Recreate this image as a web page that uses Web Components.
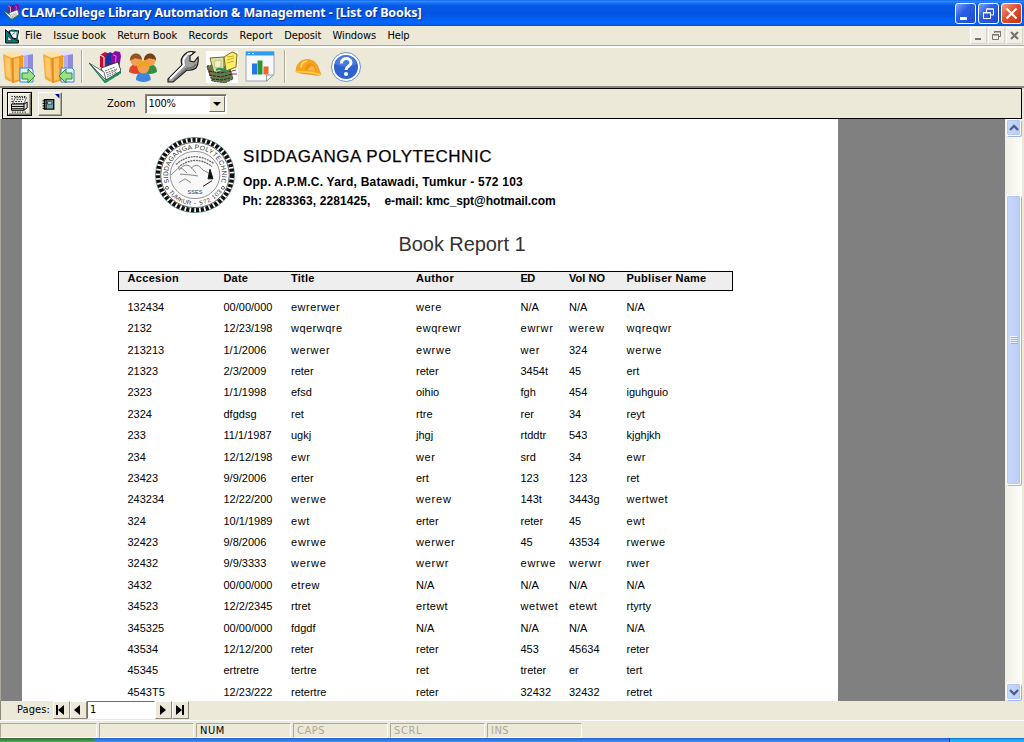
<!DOCTYPE html>
<html lang="en"><head><meta charset="utf-8"><title>CLAM-College Library Automation &amp; Management</title>
<style>
html,body{margin:0;height:742px;overflow:hidden;background:#ece9d8}
body{font:11px "DejaVu Sans Condensed","Noto Sans",sans-serif;color:#000}
</style></head><body><clam-app></clam-app>
<script>
const define=(name,html,setup)=>customElements.define(name,class extends HTMLElement{
  constructor(){super();this.attachShadow({mode:'open'});}
  connectedCallback(){this.shadowRoot.innerHTML=typeof html==='function'?html(this):html;if(setup)setup(this);}
});

/* Single line of text, tracked to occupy the width given in the "w" attribute. */
customElements.define('fit-text',class extends HTMLElement{
  connectedCallback(){
    if(this.shadowRoot)return;
    this.attachShadow({mode:'open'}).innerHTML='<style>:host{display:block;white-space:nowrap}span{display:inline-block;white-space:pre}</style><span><slot></slot></span>';
    const fit=()=>{
      const s=this.shadowRoot.querySelector('span'),n=this.textContent.length;
      s.style.letterSpacing='0';
      const nat=s.getBoundingClientRect().width;
      if(!nat||!n)return;
      let w=parseFloat(this.getAttribute('w'));
      if(!w){const c=this.textContent;w=nat+1.9*(c.match(/w/g)||[]).length;}
      s.style.letterSpacing=((w-nat)/n)+'px';
    };
    fit();requestAnimationFrame(fit);
  }
});

const box=`<path d="M18 4l12-1v20l-10 6z" fill="#b3adf0"/><path d="M25 3.500l5-.5v20l-5 3z" fill="#918bdc"/><path d="M19 6l2 0v20l-2 1z" fill="#d9d6fc"/><path d="M12 1l8-1h5l5 3-11 2z" fill="#e3e0fd"/><path d="M0 3l7-3 8 1 5 3-11 3z" fill="#ffe2a6"/><path d="M0 3l9 4 1 25-8-4z" fill="#f7ac3c"/><path d="M2 6l5 2 1 20-5-3z" fill="#ffd07c" opacity=".8"/><path d="M9 7l11-3v25l-10 3z" fill="#f39a1e"/><path d="M11 8l5-1.500v22l-5 1.500z" fill="#ffbe5a"/><path d="M9 7l1 25" stroke="#c97508" stroke-width=".7"/>`;
const books=`<path d="M11 4l5-3 5 2-1 16-9-3z" fill="#c01030"/><path d="M11 4l4 2v12" stroke="#fff" stroke-width="1" fill="none"/><path d="M17 4l4-3 4 2-2 15-6-2z" fill="#2030a0"/><path d="M22 4l4-4 5 1 1 4-3 20-7-5z" fill="#8c0aa0"/><path d="M24 4l3 1-1 15" stroke="#d080e0" fill="none"/><path d="M12 17l17-6 3 9-15 9z" fill="#fff" stroke="#222" stroke-width=".8"/><path d="M0 12l15 9 2 8z" fill="#fff" stroke="#333" stroke-width=".7"/><path d="M0 12l16 18 16-10v2L16 32z" fill="#20a060" stroke="#064" stroke-width=".6"/><path d="M16 20l10-4M17 22l11-4M18 24l10-5M18 26l10-5" stroke="#555" stroke-width=".9" stroke-dasharray="2 .7"/>`;
const person=(x,y,c,h,s=1)=>`<g transform="translate(${x} ${y}) scale(${s})"><path d="M0 18c0-5 3-8 7-8s7 3 7 8q-7 4-14 0z" fill="${c}"/><circle cx="7" cy="6.500" r="5.500" fill="#f0a050"/><path d="M1 7c-1-10 13-10 12 0-1-3-4-1-7-3-1 2-4 1-5 3z" fill="${h}"/></g>`;
const ICONS={
 out:box+`<path d="M17 17h11l2 2v12H17z" fill="#e4f1ff" stroke="#3488d8"/><path d="M19 22h6v-4l7 7-7 7v-4h-6z" fill="#9be08c" stroke="#2b8a35"/>`,
 in:box+`<path d="M18 17h11l2 2v12H18z" fill="#e4f1ff" stroke="#3488d8"/><path d="M29 22h-6v-4l-7 7 7 7v-4h6z" fill="#9be08c" stroke="#2b8a35"/>`,
 books,
 people:person(1,3,'#e0452b','#96531e')+person(15,3,'#2f9240','#764014')+person(8,10,'#3b87e0','#efa51c',1.05),
 wrench:`<path d="M20 1.500q3-1.500 8-.5l-5 4v5l4 1 4-5q1 7-2 11-4 3-9 2L6 31H1v-3l14-14q-3-7 5-12.500z" fill="#a0a0a0" stroke="#111" stroke-width="1.100"/><path d="M20 3l5-1M3 28l14-14q-2-6 3-10" stroke="#fff" stroke-width="1.800" fill="none"/><path d="M7 29l13-12q6 1 9-4" stroke="#707070" stroke-width="1.500" fill="none"/>`,
 money:`<path d="M0 0h32v32H0z" fill="#fff"/><path d="M1 15l5-1 18 2 3 12-8 4-13-2z" fill="#66794b" stroke="#222" stroke-width=".8" stroke-dasharray="2 1"/><path d="M4 7l14-1v13l-10 3z" fill="#e2e3a8" stroke="#6b6b25"/><path d="M8 10l7-1v7l-6 1z" fill="#f4f1c9" stroke="#a9a45b" stroke-width=".6"/><path d="M18 6l8-5 5 2-1 13-10 4z" fill="#ffee68" stroke="#776c16"/><path d="M21 6l7-1M21 9l7-2M21 12l7-2" stroke="#c5ac31"/><path d="M3 20l11 2 11-2M3 24l12 2 11-3M6 28l10 1 8-2" stroke="#192b20" fill="none" stroke-dasharray="3 1"/><path d="M10 19q6-3 12 2" stroke="#2b9361" stroke-width="2" fill="none"/><path d="M26 20l4-1M25 23l6 0M1 16l3 8" stroke="#963434"/>`,
 chart:`<path d="M2 1h28v22l-7 7H2z" fill="#f7f9fc" stroke="#9ba6b4"/><path d="M2 .5h28v4H2z" fill="#2c9df2"/><path d="M4 2.500h2M8 2.500h2" stroke="#d9efff"/><path d="M8 12.500h5v11H8z" fill="#2878e4"/><path d="M13.500 9.500h5v14h-5z" fill="#2b9733"/><path d="M19.500 15.500h5v8h-5z" fill="#f4652a"/><path d="M22.500 30v-6h7z" fill="#fff" stroke="#8d97a2"/>`,
 hat:`<path d="M3 21Q3 10 13 8.500q10-1 13 10l2 5q-3 2-9 0Q9 23 3 21z" fill="#f9a51c" stroke="#d98b1a" stroke-width=".6"/><path d="M8 17q0-6 6-7" stroke="#ffd878" stroke-width="1.700" fill="none"/><path d="M12 19q0-6 5-7 6 1 6 8" fill="#ee9410"/><path d="M15 19q1-4 4-4t3 5" fill="#fbb645"/><path d="M3 21q13-1 25 3" stroke="#ffcc53" stroke-width="1.500" fill="none"/>`,
 help:`<circle cx="16" cy="16" r="14.500" fill="#fff" stroke="#6e8fd6"/><circle cx="16" cy="16" r="12" fill="#2f62cc"/><path d="M5 13Q8 4 16 4t11 9q-10 5-22 0z" fill="#5c8ce6" opacity=".6"/><path d="M11.500 12.500c0-7 9.500-6 9.500-1 0 4-5 3.500-5 7.500" stroke="#fff" stroke-width="3" fill="none"/><circle cx="16" cy="23" r="2" fill="#fff"/>`,
 app:`<path d="M0 0h32v32H0z" fill="#fff"/><path d="M3 3l20 21h6v6H3z" fill="#048080" stroke="#000" stroke-width="2"/><path d="M8 16v9h8z" fill="#fff" stroke="#000"/><path d="M10 7l6-3 13 2-3 16-9-2z" fill="#fff" stroke="#000" stroke-width="2.200"/><path d="M13 6l15 1" stroke="#099" stroke-width="3"/><path d="M26 9v12M17 13l5-4" stroke="#077" stroke-width="2"/>`,
 print:`<path d="M10 6h18l-4 9H6z" fill="#fff" stroke="#000" stroke-width="1.600" stroke-dasharray="2 1.500"/><path d="M12 9h11M10 12h11" stroke="#000" stroke-width="1.300" stroke-dasharray="3 1.500"/><path d="M4 16h20l5-3v9l-5 4H4z" fill="#deddd4" stroke="#000" stroke-width="1.600"/><path d="M4 20h20M4 23.500h20M24 16v10" stroke="#000" stroke-width="1.500"/><path d="M4 4h24M4 8h3M4 12h2M5 29h22" stroke="#000" stroke-width="1.500" stroke-dasharray="2 2"/>`,
 export:`<path d="M7 9h15v15H7z" fill="#669c9c" stroke="#000" stroke-width="2"/><path d="M12 12.500h7v3.500h-7z" fill="#fff" stroke="#000"/><path d="M10 9v15" stroke="#000" stroke-width="1.300"/><path d="M4 11h5M4 15h5M4 19h5M4 23h5" stroke="#000" stroke-width="1.500"/><path d="M12 19h8M12 22h8" stroke="#bdd" stroke-dasharray="1 1"/><path d="M24 0h7v7z" fill="#00008b"/>`
};
define('clam-icon',h=>`<style>:host{display:block;flex:none;width:32px;height:32px}svg{display:block;width:100%;height:100%}</style><svg viewBox="0 0 32 32" preserveAspectRatio="none">${ICONS[h.getAttribute('name')]}</svg>`);

define('title-bar',`<style>
:host{display:flex;align-items:center;height:26px;box-sizing:border-box;padding:0 2px 0 3px;background:linear-gradient(#0058ee 0,#3593ff 1px,#1970f4 3px,#0658e6 6px,#0254e0 14px,#0260f8 20px,#0468ff 23px,#0052d5 26px);color:#fff}
clam-icon{width:16px;height:17px;margin:-2px 2px 0 0}
fit-text{flex:1;font:bold 12.5px/18px "Noto Sans","Open Sans",sans-serif;text-shadow:1px 1px #0a2a88;padding-top:0}
b{box-sizing:border-box;width:21px;height:21px;margin-left:2px;border:1px solid #fff;border-radius:3px;background:linear-gradient(135deg,#7fa4f5,#2c5fe4 40%,#1d48cf)}
b.x{background:linear-gradient(135deg,#f0a088,#e25030 45%,#c43310)}svg{display:block}
</style><clam-icon name="books"></clam-icon><fit-text w="400.500">CLAM-College Library Automation &amp; Management - [List of Books]</fit-text>
<b><svg width="19" height="19"><path d="M4 13h7v3H4z" fill="#fff"/></svg></b>
<b><svg width="19" height="19" fill="none" stroke="#fff"><path d="M4.500 8.500h7v6h-7zM4 9h8M7.500 8V5h7v6h-3M7 5h8"/></svg></b>
<b class="x"><svg width="19" height="19"><path d="M4.500 4.500l10 10m0-10l-10 10" stroke="#fff" stroke-width="2.200"/></svg></b>`);

define('menu-bar',`<style>
:host{display:flex;align-items:center;height:19px;padding-left:4px;background:#ece9d8}
clam-icon{width:16px;height:16px;margin-right:5px}
fit-text{line-height:17px;margin-right:11.350px}
i{flex:1}b{width:15px;height:15px;margin-right:1px;border:1px solid #fff;border-right-color:#d8d4c4;border-bottom-color:#d8d4c4;background:#f1efe6}
svg{display:block}
</style><clam-icon name="app"></clam-icon><fit-text w="17">File</fit-text><fit-text w="52.500">Issue book</fit-text><fit-text w="60">Return Book</fit-text><fit-text w="39.500">Records</fit-text><fit-text w="33.500">Report</fit-text><fit-text w="37">Deposit</fit-text><fit-text w="43.500">Windows</fit-text><fit-text w="22">Help</fit-text><i></i>
<b><svg width="15" height="15"><path d="M4 10h6v2H4z" fill="#77756b"/></svg></b><b><svg width="15" height="15" fill="none" stroke="#77756b"><path d="M3.500 6.500h6v5h-6zM3 7h7M5.500 5V3.500h6v5H10M5 4h7"/></svg></b><b><svg width="15" height="15"><path d="M4 4l7 7m0-7l-7 7" stroke="#77756b" stroke-width="2.200"/></svg></b>`);

define('tool-bar',`<style>
:host{display:flex;align-items:center;height:43px;box-sizing:border-box;border-top:1px solid #aca899;box-shadow:inset 0 2px #fff;padding:1px 0 0 3px;border-bottom:2px solid #8a867a;background:#ece9d8}
i{width:1px;height:33px;background:#aca899;border-right:1px solid #fff}
</style><clam-icon name="out"></clam-icon><clam-icon name="in" style="margin-left:8px"></clam-icon><i style="margin:0 6px 0 6px"></i><clam-icon name="books"></clam-icon><clam-icon name="people" style="margin-left:7px"></clam-icon><clam-icon name="wrench" style="margin-left:7px"></clam-icon><clam-icon name="money" style="margin-left:7px"></clam-icon><clam-icon name="chart" style="margin-left:6px"></clam-icon><i style="margin:0 7px 0 8px"></i><clam-icon name="hat"></clam-icon><clam-icon name="help" style="margin-left:5px"></clam-icon>`);

define('preview-bar',`<style>
:host{display:flex;align-items:center;height:31px;box-sizing:border-box;margin:0 2px;border:1px solid #000;background:#ece9d8;padding-left:4px}
.b{box-sizing:border-box;width:24px;height:24px;border:1px solid;border-color:#fff #716f64 #716f64 #fff;box-shadow:inset -1px -1px #aca899;padding:1px}
.b.p{outline:1px solid #000;outline-offset:0;margin-left:1px;width:23px;height:22px;padding:0}
clam-icon{width:20px;height:20px}
fit-text{line-height:15px}
.s{display:flex;box-sizing:border-box;width:82px;height:20px;margin-left:9px;background:#fff;border:1px solid;border-color:#8b887b #fff #fff #8b887b;box-shadow:inset 1px 1px #716f64;padding:1px 1px 1px 3px;justify-content:space-between}
.d{width:14px;background:#ece9d8;border:1px solid;border-color:#fff #716f64 #716f64 #fff}
svg{display:block}
</style><div class="b p"><clam-icon name="print"></clam-icon></div><div class="b" style="margin-left:7px"><clam-icon name="export"></clam-icon></div><fit-text w="28.500" style="margin-left:45px">Zoom</fit-text><div class="s"><fit-text w="27">100%</fit-text><div class="d"><svg width="14" height="14"><path d="M3 5h8L7 9z"/></svg></div></div>`);

define('college-seal',`<style>:host{display:block;width:82px;height:78px}svg{display:block}text{font-family:"Liberation Sans",sans-serif;fill:#333}</style>
<svg width="82" height="78" viewBox="-41 -41 82 82" preserveAspectRatio="none"><defs><path id="t" d="M-25.400 9A27 27 0 1 1 25.400 9"/><path id="u" d="M-26.500 17.800A32 32 0 0 0 26.500 17.800"/></defs>
<circle r="39.500" fill="#fff" stroke="#4a8585" stroke-width=".8"/><circle r="37" fill="none" stroke="#111" stroke-width="4.500" stroke-dasharray="3.200 1.700"/><circle r="34.300" fill="#fff" stroke="#333" stroke-width=".8"/><circle r="24.800" fill="#f8f8f8" stroke="#777" stroke-width=".8"/>
<text font-size="6.800"><textPath href="#t" textLength="101" startOffset="1">SIDDAGANGA POLYTECHNIC</textPath></text><text font-size="6.200"><textPath href="#u" textLength="27" startOffset="0">TUMKUR</textPath></text><text font-size="6.200"><textPath href="#u" startOffset="30">-</textPath></text><text font-size="6.200"><textPath href="#u" textLength="27" startOffset="36">572 103</textPath></text><text font-size="5.500" x="-7.500" y="20" textLength="15">SSES</text>
<path d="M-24 0l5-5q4-5 8 0l3 3M-16-5q7-10 13-2l4 5M-4-7q6-7 11 1l8 5M-15-1l11 1 7 1M-16 8l6-4 6 4" fill="none" stroke="#777" stroke-width=".9"/><path d="M-19-11q17-16 38-1M-17-8q17-14 34-1" fill="none" stroke="#666" stroke-width="1.300" stroke-dasharray="2 .8"/><path d="M15-6l3 10h-5zM8 12l9-6" stroke="#111" fill="#111"/><circle cx="-28" cy="13.500" r="1.500" fill="none" stroke="#333" stroke-width=".8"/><circle cx="28" cy="13.500" r="1.500" fill="none" stroke="#333" stroke-width=".8"/></svg>`);

const HEAD=[['Accesion',51.5],['Date',24.5],['Title',23.5],['Author',38],['ED',14],['Vol NO',36],['Publiser Name',80]];
const ROWS=`132434|00/00/000|ewrerwer|were|N/A|N/A|N/A
2132|12/23/198|wqerwqre|ewqrewr|ewrwr|werew|wqreqwr
213213|1/1/2006|werwer|ewrwe|wer|324|werwe
21323|2/3/2009|reter|reter|3454t|45|ert
2323|1/1/1998|efsd|oihio|fgh|454|iguhguio
2324|dfgdsg|ret|rtre|rer|34|reyt
233|11/1/1987|ugkj|jhgj|rtddtr|543|kjghjkh
234|12/12/198|ewr|wer|srd|34|ewr
23423|9/9/2006|erter|ert|123|123|ret
243234|12/22/200|werwe|werew|143t|3443g|wertwet
324|10/1/1989|ewt|erter|reter|45|ewt
32423|9/8/2006|ewrwe|werwer|45|43534|rwerwe
32432|9/9/3333|werwe|werwr|ewrwe|werwr|rwer
3432|00/00/000|etrew|N/A|N/A|N/A|N/A
34523|12/2/2345|rtret|ertewt|wetwet|etewt|rtyrty
345325|00/00/000|fdgdf|N/A|N/A|N/A|N/A
43534|12/12/200|reter|reter|453|45634|reter
45345|ertretre|tertre|ret|treter|er|tert
4543T5|12/23/222|retertre|reter|32432|32432|retret`.split('\n').map(r=>r.split('|'));
define('report-table',`<style>
:host{display:block;margin-left:96px;width:615px;font:11px "Liberation Sans",sans-serif}
.h,.r{display:grid;grid-template-columns:96px 67.5px 125px 104.5px 48.5px 57.5px 1fr;padding-left:9.5px;box-sizing:border-box}
.h{height:20px;border:1px solid #000;background:#eee;font-weight:bold;line-height:13px;padding-left:8.5px;margin-bottom:5.800px}
.r{height:21.400px;line-height:21px}
</style><div class="h">${HEAD.map(([t,w])=>`<fit-text w="${w}">${t}</fit-text>`).join('')}</div>${ROWS.map(r=>`<div class="r">${r.map(t=>`<fit-text>${t}</fit-text>`).join('')}</div>`).join('')}`);

define('report-page',`<style>
:host{display:block;width:816px;height:100%;overflow:hidden;background:#fff;font-family:"Liberation Sans",sans-serif}
.top{display:flex;padding:17px 0 0 132px;height:96px;box-sizing:border-box}
.x{padding:11px 0 0 7px;font-size:12px;font-weight:bold}
.n{font-size:17px;line-height:20px;font-weight:normal;-webkit-text-stroke:.25px #000}
.a{line-height:19px;margin-top:6px}.c{display:flex;line-height:19px;margin-left:-.5px}
.t{font-size:20px;line-height:24px;color:#333;margin:17px 0 15px 376.500px}
</style><div class="top"><college-seal></college-seal><div class="x"><fit-text class="n" w="249">SIDDAGANGA POLYTECHNIC</fit-text><fit-text class="a" w="280">Opp. A.P.M.C. Yard, Batawadi, Tumkur - 572 103</fit-text><div class="c"><fit-text w="128">Ph: 2283363, 2281425,</fit-text><fit-text w="171" style="margin-left:14px">e-mail: kmc_spt@hotmail.com</fit-text></div></div></div><fit-text class="t" w="127">Book Report 1</fit-text><report-table></report-table>`);

define('scroll-bar',`<style>
:host{display:flex;flex-direction:column;width:17px;background:linear-gradient(90deg,#f0eee4,#fefefa)}
b{box-sizing:border-box;display:flex;align-items:center;justify-content:center;flex:none;width:15px;height:17px;margin-left:1px;border:1px solid #fff;border-radius:2px;background:linear-gradient(90deg,#c9d8fc,#bbcdf9);box-shadow:inset 0 0 0 1px #b5c8f4,1px 1px #9bb5e4}
b.t{height:290px;margin-top:59px}i{flex:1}svg{display:block}
</style><b><svg width="10" height="8"><path d="M1 6l4-4 4 4" fill="none" stroke="#4d6185" stroke-width="2.300"/></svg></b><b class="t"><svg width="8" height="9"><path d="M0 .5h7M0 2.500h7M0 4.500h7M0 6.500h7" stroke="#eef4fe"/><path d="M1 1.500h7M1 3.500h7M1 5.500h7M1 7.500h7" stroke="#8cb0f8"/></svg></b><i></i><b style="margin-bottom:1px"><svg width="10" height="8"><path d="M1 2l4 4 4-4" fill="none" stroke="#4d6185" stroke-width="2.300"/></svg></b>`);

define('report-viewer',`<style>
:host{display:flex;height:582px;box-sizing:border-box;background:#808080;border-left:1px solid #aca899;border-right:2px solid #ece9d8;padding-left:21px}
i{flex:1}</style><report-page></report-page><i></i><scroll-bar></scroll-bar>`);

define('page-nav',`<style>
:host{display:flex;height:19px;box-sizing:border-box;border-left:1px solid #8a867a;padding-left:16px;background:#ece9d8}
b{box-sizing:border-box;width:17px;height:18px;border:1px solid;border-color:#fff #8b887b #8b887b #fff}svg{display:block}
fit-text{line-height:18px}
.f{box-sizing:border-box;width:68px;height:18px;background:#fff;border:1px solid;border-color:#716f64 #fff #fff #716f64;padding-left:2px;line-height:16px}
</style><fit-text w="33" style="margin-right:3px">Pages:</fit-text><b><svg width="15" height="16"><path d="M2 3h2v10H2zM10 3v10L4 8z"/></svg></b><b><svg width="15" height="16"><path d="M9 3v10L3 8z"/></svg></b><div class="f">1</div><b><svg width="15" height="16"><path d="M4 3v10l6-5z"/></svg></b><b><svg width="15" height="16"><path d="M3 3v10l6-5zM9 3h2v10H9z"/></svg></b>`);

define('status-bar',`<style>
:host{display:flex;height:18px;box-sizing:border-box;border-top:1px solid #fff;padding-top:2px;background:#ece9d8}
div{box-sizing:border-box;width:95px;height:15px;margin-right:2px;border:1px solid;border-color:#aca899 #fff #fff #aca899;padding-left:3px;color:#aca899;line-height:14px}
</style><div style="width:97px"></div><div></div><div style="color:#000"><fit-text w="25">NUM</fit-text></div><div><fit-text w="28">CAPS</fit-text></div><div><fit-text w="28">SCRL</fit-text></div><div><fit-text w="18">INS</fit-text></div>`);

define('task-bar',`<style>:host{display:flex;height:4px;background:linear-gradient(#2360d2,#4292f4)}b{width:95px;background:linear-gradient(#2e6b37,#55a955);border-radius:0 4px 0 0}i{flex:1}u{width:74px;border-left:1px solid #083c78;background:linear-gradient(#1364cc,#18b5f2 2px)}</style><b></b><i></i><u></u>`);

define('clam-app',`<style>:host{display:flex;flex-direction:column;width:1024px;height:742px}title-bar,menu-bar,tool-bar,preview-bar,report-viewer,page-nav,status-bar,task-bar{flex:none}</style><title-bar></title-bar><menu-bar></menu-bar><tool-bar></tool-bar><preview-bar></preview-bar><report-viewer></report-viewer><page-nav></page-nav><status-bar></status-bar><task-bar></task-bar>`);
</script></body></html>
